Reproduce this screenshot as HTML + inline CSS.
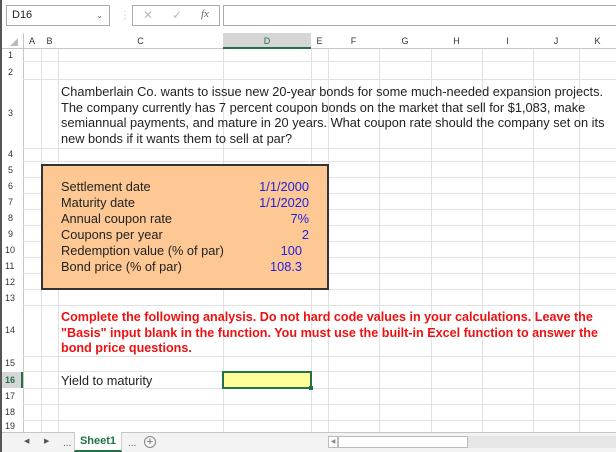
<!DOCTYPE html>
<html><head><meta charset="utf-8"><style>
*{margin:0;padding:0;box-sizing:border-box}
body{width:616px;height:452px;overflow:hidden;background:#fff;font-family:"Liberation Sans",Arial,sans-serif;position:relative}
.a{position:absolute}
.hl{position:absolute;height:1px;background:#e1e1e1;left:23px;right:0}
.vl{position:absolute;width:1px;background:#e1e1e1;top:49px;height:383px}
.rh{position:absolute;left:0;width:23px;font-size:9px;color:#333;text-align:left;padding-left:8px}
.ch{position:absolute;top:33px;height:16px;font-size:9px;color:#333;text-align:center;line-height:16px}
.t{position:absolute;font-size:12.8px;color:#222;line-height:15.5px}
.b{color:#2222dd;text-align:right;position:absolute;font-size:12.8px;line-height:16px}
</style></head><body>
<div class="a" style="left:0;top:0;width:616px;height:33px;background:#fff"></div>
<div class="a" style="left:0;top:0;width:2px;height:452px;background:#555"></div>
<div class="a" style="left:6px;top:5px;width:104px;height:21px;border:1px solid #aaa;font-size:11px;padding:3px 5px;color:#222">D16<span style="position:absolute;right:6px;top:5px;font-size:8px;color:#555">&#8964;</span></div>
<div class="a" style="left:120px;top:10px;color:#bbb;font-size:10px">&#8942;</div>
<div class="a" style="left:132px;top:5px;width:88px;height:21px;border:1px solid #aaa;font-size:12px;color:#bbb"><span style="position:absolute;left:10px;top:2px">&#10005;</span><span style="position:absolute;left:39px;top:2px">&#10003;</span><span style="position:absolute;left:68px;top:2px;color:#666;font-style:italic;font-family:'Liberation Serif',serif;font-size:11px">fx</span></div>
<div class="a" style="left:223px;top:5px;width:400px;height:21px;border:1px solid #aaa"></div>
<div class="a" style="left:2px;top:33px;width:614px;height:16px;background:#fff;border-bottom:1px solid #c6c6c6"></div>
<div class="a" style="left:223px;top:33px;width:88px;height:16px;background:#d6d6d6;border-bottom:2px solid #217346"></div>
<div class="a" style="left:10px;top:38px;width:0;height:0;border-left:8px solid transparent;border-bottom:8px solid #bbb"></div>
<div class="ch" style="left:23px;width:18px">A</div>
<div class="ch" style="left:41px;width:17px">B</div>
<div class="ch" style="left:58px;width:165px">C</div>
<div class="ch" style="left:223px;width:88px;color:#217346">D</div>
<div class="ch" style="left:311px;width:17px">E</div>
<div class="ch" style="left:328px;width:51px">F</div>
<div class="ch" style="left:379px;width:52px">G</div>
<div class="ch" style="left:431px;width:51px">H</div>
<div class="ch" style="left:482px;width:51px">I</div>
<div class="ch" style="left:533px;width:46px">J</div>
<div class="ch" style="left:579px;width:37px">K</div>
<div class="a" style="left:23px;top:33px;width:1px;height:400px;background:#c6c6c6"></div>
<div class="vl" style="left:41px"></div><div class="vl" style="left:58px"></div><div class="vl" style="left:223px"></div><div class="vl" style="left:311px"></div><div class="vl" style="left:328px"></div><div class="vl" style="left:379px"></div><div class="vl" style="left:431px"></div><div class="vl" style="left:482px"></div><div class="vl" style="left:533px"></div><div class="vl" style="left:579px"></div>
<div class="hl" style="top:61px"></div><div class="hl" style="top:79px"></div><div class="hl" style="top:148px"></div><div class="hl" style="top:161px"></div><div class="hl" style="top:177px"></div><div class="hl" style="top:193px"></div><div class="hl" style="top:209px"></div><div class="hl" style="top:225px"></div><div class="hl" style="top:241px"></div><div class="hl" style="top:257px"></div><div class="hl" style="top:273px"></div><div class="hl" style="top:289px"></div><div class="hl" style="top:305px"></div><div class="hl" style="top:356px"></div><div class="hl" style="top:371px"></div><div class="hl" style="top:388px"></div><div class="hl" style="top:404px"></div><div class="hl" style="top:420px"></div>
<div class="rh" style="top:50px">1</div><div class="rh" style="top:67px">2</div><div class="rh" style="top:108px">3</div><div class="rh" style="top:149px">4</div><div class="rh" style="top:165px">5</div><div class="rh" style="top:181px">6</div><div class="rh" style="top:197px">7</div><div class="rh" style="top:213px">8</div><div class="rh" style="top:229px">9</div><div class="rh" style="top:245px;padding-left:5px">10</div><div class="rh" style="top:261px;padding-left:5px">11</div><div class="rh" style="top:277px;padding-left:5px">12</div><div class="rh" style="top:293px;padding-left:5px">13</div><div class="rh" style="top:325px;padding-left:5px">14</div><div class="rh" style="top:358px;padding-left:5px">15</div>
<div class="a" style="left:2px;top:372px;width:21px;height:16px;background:#d6d6d6;border-right:2px solid #217346"></div>
<div class="rh" style="top:375px;padding-left:5px;color:#217346;font-weight:bold">16</div>
<div class="rh" style="top:391px;padding-left:5px">17</div><div class="rh" style="top:407px;padding-left:5px">18</div><div class="rh" style="top:421px;padding-left:5px">19</div>
<div class="t" style="left:61px;top:84px;width:560px;white-space:nowrap">Chamberlain Co. wants to issue new 20-year bonds for some much-needed expansion projects.<br>The company currently has 7 percent coupon bonds on the market that sell for $1,083, make<br>semiannual payments, and mature in 20 years. What coupon rate should the company set on its<br>new bonds if it wants them to sell at par?</div>
<div class="a" style="left:41px;top:164px;width:288px;height:126px;background:#fdc894;border:2px solid #333"></div>
<div class="t" style="left:61px;top:179px;line-height:16px">Settlement date<br>Maturity date<br>Annual coupon rate<br>Coupons per year<br>Redemption value (% of par)<br>Bond price (% of par)</div>
<div class="b" style="left:223px;top:179px;width:86px">1/1/2000<br>1/1/2020<br>7%<br>2</div>
<div class="b" style="left:223px;top:243px;width:79px">100<br>108.3</div>
<div class="t" style="left:61px;top:310px;color:#ee1111;font-weight:bold;white-space:nowrap;font-size:12.6px">Complete the following analysis. Do not hard code values in your calculations. Leave the<br>"Basis" input blank in the function. You must use the built-in Excel function to answer the<br>bond price questions.</div>
<div class="t" style="left:61px;top:373px">Yield to maturity</div>
<div class="a" style="left:222px;top:371px;width:90px;height:18px;background:#ffff99;border:2px solid #217346"></div>
<div class="a" style="left:309px;top:386px;width:4px;height:4px;background:#217346"></div>
<div class="a" style="left:2px;top:432px;width:614px;height:20px;background:#f3f3f3;border-top:1px solid #c6c6c6"></div>
<div class="a" style="left:24px;top:437px;font-size:7px;color:#555">&#9664;</div>
<div class="a" style="left:44px;top:437px;font-size:7px;color:#555">&#9654;</div>
<div class="a" style="left:63px;top:438px;font-size:10px;color:#217346">...</div>
<div class="a" style="left:74px;top:432px;width:48px;height:20px;background:#fff;border-bottom:2px solid #217346;border-left:1px solid #ccc;border-right:1px solid #ccc;font-size:11px;font-weight:bold;color:#217346;text-align:center;line-height:18px">Sheet1</div>
<div class="a" style="left:128px;top:438px;font-size:10px;color:#217346">...</div>
<div class="a" style="left:144px;top:436px;width:12px;height:12px;border:1px solid #888;border-radius:50%;font-size:11px;line-height:10px;text-align:center;color:#666">+</div>
<div class="a" style="left:328px;top:436px;width:10px;height:12px;border:1px solid #bbb;background:#fff;font-size:6px;color:#888;line-height:10px;text-align:center">&#9664;</div>
<div class="a" style="left:338px;top:436px;width:130px;height:12px;border:1px solid #bbb;background:#fff"></div>
<div class="a" style="left:468px;top:436px;width:148px;height:12px;background:#e6e6e6"></div>
</body></html>
